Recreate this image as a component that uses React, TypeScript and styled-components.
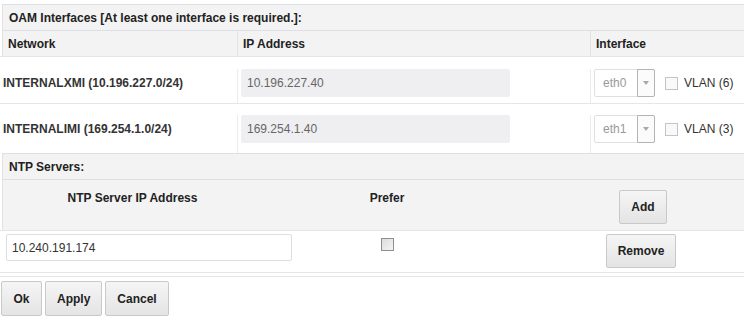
import React from "react";
import styled, { createGlobalStyle } from "styled-components";

const GlobalStyle = createGlobalStyle`
    html, body {
        margin: 0;
        padding: 0;
        background: #fff;
    }
    body {
        font-family: "Liberation Sans", Arial, sans-serif;
        font-size: 12px;
        color: #333;
        overflow: hidden;
    }
    * {
        box-sizing: border-box;
    }
`

const Page = styled.div`
    width: 744px;
    padding-top: 4px;
`

const SectionBar = styled.div`
    height: 26px;
    margin-left: 2px;
    padding-left: 6px;
    display: flex;
    align-items: center;
    background: #f3f3f3;
    border-top: 1px solid #dcdfe3;
    border-left: 1px solid #e3e3e3;
    font-weight: bold;
    color: #222;
`

const HeadRow = styled.div<{ $cols: string; $height: number }>`
    display: grid;
    grid-template-columns: ${p => p.$cols};
    height: ${p => p.$height}px;
    margin-left: 2px;
    background: #f3f3f3;
    border-top: 1px solid #dcdfe3;
    border-left: 1px solid #e3e3e3;
    align-items: center;
    font-weight: bold;
    color: #222;
`

const HeadCell = styled.div<{ $divider?: boolean; $center?: boolean; $pad?: string }>`
    height: 100%;
    display: flex;
    align-items: ${p => (p.$center ? "flex-start" : "center")};
    justify-content: ${p => (p.$center ? "center" : "flex-start")};
    padding: ${p => p.$pad || "0 0 0 5px"};
    line-height: 16px;
    border-right: ${p => (p.$divider ? "1px solid #dfe2e6" : "none")};
    min-width: 0;
`

const DataRow = styled.div<{ $cols: string; $height: number; $top: number; $last?: boolean }>`
    display: grid;
    grid-template-columns: ${p => p.$cols};
    height: ${p => p.$height}px;
    border-top: 1px solid #e6e6e6;
    border-bottom: ${p => (p.$last ? "1px solid #e6e6e6" : "none")};
    padding-top: ${p => p.$top}px;
`

const Cell = styled.div<{ $divider?: boolean; $pad?: string; $center?: boolean }>`
    display: flex;
    align-items: flex-start;
    justify-content: ${p => (p.$center ? "center" : "flex-start")};
    padding: ${p => p.$pad || "0"};
    border-right: ${p => (p.$divider ? "1px solid #ececec" : "none")};
    min-width: 0;
`

const NetName = styled.div`
    height: 28px;
    display: flex;
    align-items: center;
    font-weight: bold;
    color: #333;
    white-space: nowrap;
`

const IpField = styled.input`
    width: 269px;
    height: 28px;
    padding: 0 5px;
    border: 1px solid #efeff1;
    border-radius: 2px;
    background: #efeff1;
    color: #666;
    font: 12px "Liberation Sans", Arial, sans-serif;
    outline: none;
`

const TextField = styled.input`
    flex: none;
    width: 286px;
    height: 27px;
    padding: 0 5px;
    border: 1px solid #dedede;
    border-radius: 2px;
    background: #fff;
    color: #333;
    font: 12px "Liberation Sans", Arial, sans-serif;
    outline: none;
`

const IfaceGroup = styled.div`
    display: flex;
    align-items: center;
    height: 28px;
`

const SelectBox = styled.div`
    display: flex;
    width: 61px;
    height: 28px;
    border: 1px solid #e0e0e0;
    border-radius: 2px;
    background: #fff;
`

const SelectValue = styled.div`
    flex: 1;
    display: flex;
    align-items: center;
    padding-left: 8px;
    color: #999;
`

const SelectArrow = styled.div`
    width: 18px;
    margin: -1px -1px -1px 0;
    border: 1px solid #b4b4b4;
    border-radius: 0 2px 2px 0;
    background: #fbfbfb;
    display: flex;
    align-items: center;
    justify-content: center;

    &::after {
        content: "";
        border-left: 3px solid transparent;
        border-right: 3px solid transparent;
        border-top: 4px solid #a8a8a8;
    }
`

const Check = styled.input<{ $dark?: boolean }>`
    appearance: none;
    -webkit-appearance: none;
    width: 13px;
    height: 13px;
    margin: ${p => (p.$dark ? "4px 0 0 0" : "0 6px 0 10px")};
    border: 1px solid ${p => (p.$dark ? "#8e8e8e" : "#c4c4c4")};
    border-radius: 0;
    background: ${p => (p.$dark ? "linear-gradient(135deg, #dcdcdc, #f4f4f4)" : "#f9f9f9")};
`

const CheckLabel = styled.span`
    color: #333;
    white-space: nowrap;
`

const Button = styled.button<{ $height?: number }>`
    height: ${p => p.$height || 35}px;
    min-width: 41px;
    padding: 0 11px;
    border: 1px solid #c9c9c9;
    border-radius: 2px;
    background: linear-gradient(#f5f5f5, #e4e4e4);
    color: #222;
    font: bold 12px "Liberation Sans", Arial, sans-serif;
    cursor: pointer;
`

const Footer = styled.div`
    display: flex;
    gap: 3px;
    margin-top: 3px;
    padding: 4px 0 0 1px;
    border-top: 1px solid #e6e6e6;
`

const oamCols = "238px 353px 1fr";
const oamHeadCols = "235px 353px 1fr";
const ntpCols = "262px 250px 1fr";
const ntpHeadCols = "259px 250px 1fr";

const interfaces = [
    { name: "INTERNALXMI (10.196.227.0/24)", ip: "10.196.227.40", eth: "eth0", vlan: 6, height: 47, top: 12 },
    { name: "INTERNALIMI (169.254.1.0/24)", ip: "169.254.1.40", eth: "eth1", vlan: 3, height: 50, top: 11 },
];

const App = () => {
    return (
        <Page>
            <GlobalStyle />
            <SectionBar>OAM Interfaces [At least one interface is required.]:</SectionBar>
            <HeadRow $cols={oamHeadCols} $height={26}>
                <HeadCell $divider>Network</HeadCell>
                <HeadCell $divider>IP Address</HeadCell>
                <HeadCell>Interface</HeadCell>
            </HeadRow>
            {interfaces.map(row => (
                <DataRow key={row.eth} $cols={oamCols} $height={row.height} $top={row.top}>
                    <Cell $divider $pad="0 0 0 3px">
                        <NetName>{row.name}</NetName>
                    </Cell>
                    <Cell $divider $pad="0 0 0 3px">
                        <IpField value={row.ip} readOnly />
                    </Cell>
                    <Cell $pad="0 0 0 3px">
                        <IfaceGroup>
                            <SelectBox>
                                <SelectValue>{row.eth}</SelectValue>
                                <SelectArrow />
                            </SelectBox>
                            <Check type="checkbox" />
                            <CheckLabel>VLAN ({row.vlan})</CheckLabel>
                        </IfaceGroup>
                    </Cell>
                </DataRow>
            ))}
            <SectionBar>NTP Servers:</SectionBar>
            <HeadRow $cols={ntpHeadCols} $height={51}>
                <HeadCell $center $pad="10px 0 0 0">NTP Server IP Address</HeadCell>
                <HeadCell $center $pad="10px 0 0 0">Prefer</HeadCell>
                <HeadCell $center $pad="10px 0 0 30px">
                    <Button $height={34}>Add</Button>
                </HeadCell>
            </HeadRow>
            <DataRow $cols={ntpCols} $height={43} $top={3} $last>
                <Cell $pad="0 0 0 6px">
                    <TextField value="10.240.191.174" readOnly />
                </Cell>
                <Cell $center>
                    <Check type="checkbox" $dark />
                </Cell>
                <Cell $center $pad="0 0 0 26px">
                    <Button $height={34}>Remove</Button>
                </Cell>
            </DataRow>
            <Footer>
                <Button>Ok</Button>
                <Button>Apply</Button>
                <Button>Cancel</Button>
            </Footer>
        </Page>
    )
}

export default App;
